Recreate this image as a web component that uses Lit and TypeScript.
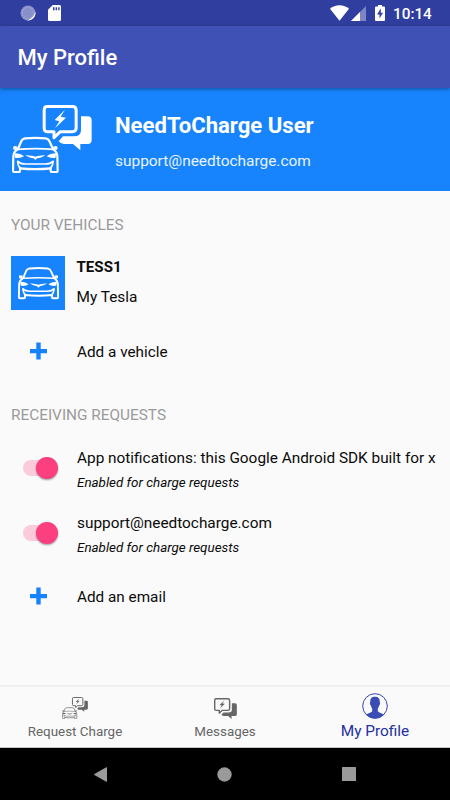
import { LitElement, html, css, svg } from "lit";
import { customElement, property } from "lit/decorators.js";

// Front view of a car, drawn on a 140 x 110 grid.
const carShape = svg`
  <g fill="none" stroke="currentColor" stroke-width="6.500" stroke-linejoin="round" stroke-linecap="round">
    <path d="M18 37 L28 13 Q31 6 39 5 Q70 2 101 5 Q109 6 112 13 L123 37"/>
    <path d="M17 38 Q70 34 124 38" stroke-width="5"/>
    <path d="M17 38 Q5 45 4 58 L3 102 Q3 106 7 106 H20 Q24 106 24 102 V95 Q70 100 116 95 V102 Q116 106 120 106 H133 Q137 106 137 102 L136 58 Q135 45 124 38"/>
    <path d="M17 74 Q25 82 40 82 H100 Q115 82 123 74" stroke-width="5"/>
    <path d="M17 75 Q18 90 26 95 M123 75 Q122 90 114 95" stroke-width="5"/>
  </g>
  <g fill="currentColor">
    <path d="M3 33 Q3 28 9 28 L17 30 L13 39 H5Z M137 33 Q137 28 131 28 L123 30 L127 39 H135Z"/>
    <path d="M8 50 Q26 50 36 59 Q24 66 9 63Z M132 50 Q114 50 104 59 Q116 66 131 63Z"/>
    <path d="M40 55 L64 58 L70 60 L76 58 L100 55 Q86 65 75 65 L70 70 L65 65 Q54 65 40 55Z"/>
  </g>`;

// Two overlapping speech bubbles with a lightning bolt, on a 148 x 136 grid.
const bubblesShape = svg`
  <path d="M13 4.500 H89 Q100.500 4.500 100.500 16 V69 Q100.500 80 89 80 H53 L34 98 V80 H13 Q4.500 80 4.500 69 V16 Q4.500 4.500 13 4.500Z"
    fill="none" stroke="currentColor" stroke-width="9" stroke-linejoin="round"/>
  <path d="M67 14 L36 45 L50 49 L37 70 L70 38 L54 35Z" fill="currentColor"/>
  <path d="M115 34 H135 Q147 34 147 46 V105 Q147 117 135 117 H113 V136 L91 117 H65 Q55 117 48 109 L61 94 H94 Q115 94 115 76Z"
    fill="currentColor"/>`;

@customElement("car-icon")
class CarIcon extends LitElement {
  static styles = css`
    :host { display: block; }
    svg { display: block; width: 100%; height: 100%; overflow: visible; }
  `;
  render() {
    return html`<svg viewBox="0 0 140 110" preserveAspectRatio="none">${carShape}</svg>`;
  }
}

@customElement("bubbles-icon")
class BubblesIcon extends LitElement {
  static styles = css`
    :host { display: block; }
    svg { display: block; width: 100%; height: 100%; overflow: visible; }
  `;
  render() {
    return html`<svg viewBox="0 0 148 136" preserveAspectRatio="none">${bubblesShape}</svg>`;
  }
}

@customElement("charge-logo")
class ChargeLogo extends LitElement {
  static styles = css`
    :host { display: block; }
    svg { display: block; width: 100%; height: 100%; }
  `;
  render() {
    return html`<svg viewBox="0 0 240 205">
      <g transform="translate(0 95)">${carShape}</g>
      <g transform="translate(92 0)">${bubblesShape}</g>
    </svg>`;
  }
}

@customElement("toggle-switch")
class ToggleSwitch extends LitElement {
  static styles = css`
    :host { display: block; width: 35px; height: 22px; }
    .track {
      width: 30px; height: 16px; margin-top: 3px; border-radius: 8px;
      background: #fccbdb; display: flex; align-items: center;
    }
    .thumb {
      flex: none; width: 22px; height: 22px; margin-left: 13px; border-radius: 50%;
      background: #fb3f7f; box-shadow: 0 1px 2px rgba(0, 0, 0, 0.4);
    }
    .wrap { display: flow-root; }
  `;
  render() {
    return html`<div class="wrap"><div class="track"><div class="thumb"></div></div></div>`;
  }
}

@customElement("add-row")
class AddRow extends LitElement {
  @property() label = "";
  static styles = css`
    :host { display: flex; align-items: center; height: 24px; }
    .lead { width: 77px; display: flex; padding: 0 0 2px 30px; box-sizing: border-box; }
    svg { display: block; width: 17px; height: 18px; }
    .label { font-size: 15.3px; line-height: 20px; white-space: nowrap; }
  `;
  render() {
    return html`
      <div class="lead"><svg viewBox="0 0 17 18"><path d="M6.300 .5H10.700V6.900H17V11.200H10.700V17.600H6.300V11.200H0V6.900H6.300Z" fill="#1682fb"/></svg></div>
      <div class="label">${this.label}</div>`;
  }
}

@customElement("request-row")
class RequestRow extends LitElement {
  @property() label = "";
  static styles = css`
    :host { display: flex; align-items: center; height: 45px; }
    .lead { flex: none; width: 77px; padding: 0 0 4px 23px; box-sizing: border-box; }
    .name { font-size: 15.36px; line-height: 20px; white-space: nowrap; }
    .note { font-size: 13.4px; line-height: 17px; font-style: italic; margin-top: 6px; white-space: nowrap; }
  `;
  render() {
    return html`
      <div class="lead"><toggle-switch></toggle-switch></div>
      <div>
        <div class="name">${this.label}</div>
        <div class="note">Enabled for charge requests</div>
      </div>`;
  }
}

@customElement("app-root")
class AppRoot extends LitElement {
  static styles = css`
    :host {
      display: flex; flex-direction: column; width: 450px; height: 800px; overflow: hidden;
      background: #fafafa; color: #0b0b0b; font-family: Roboto, "Noto Sans", sans-serif;
    }
    .status {
      flex: none; height: 26px; background: #303f9f; color: #fff; box-sizing: border-box;
      display: flex; align-items: center; padding: 0 17px 0 20px;
    }
    .status svg { display: block; flex: none; }
    .sd { margin-left: 12px; }
    .wifi { margin-left: auto; }
    .cell { margin-left: 2px; }
    .battery { margin-left: 9px; }
    .clock { font-size: 15.3px; font-weight: 500; line-height: 20px; margin: 2px 0 0 8px; width: 40px; white-space: nowrap; }
    .bar {
      flex: none; height: 62px; box-sizing: border-box; padding: 1px 0 0 17.5px; background: #3f51b5; color: #fff;
      display: flex; align-items: center; font-size: 22px; font-weight: 500;
      box-shadow: 0 1px 4px rgba(0, 0, 0, 0.4); z-index: 1;
    }
    .profile {
      flex: none; height: 103px; box-sizing: border-box; background: #1784fd; color: #fff;
      display: flex; padding: 17px 0 0 12px;
    }
    .profile charge-logo { width: 80px; height: 68.300px; }
    .who { margin-left: 23px; white-space: nowrap; }
    .user { font-size: 22.1px; font-weight: 700; line-height: 28px; margin-top: 6px; }
    .mail { font-size: 15.45px; line-height: 20px; margin-top: 12px; color: #e9f3ff; }
    .content { flex: 1; min-height: 0; }
    .heading { color: #9a9a9a; font-size: 15.36px; line-height: 20px; padding-left: 11px; white-space: nowrap; }
    .first { margin-top: 24px; }
    .vehicle { display: flex; margin: 21px 0 0 11px; height: 54px; }
    .thumb { width: 54px; height: 54px; background: #1784fd; color: #fff; display: flex; align-items: center; justify-content: center; }
    .thumb car-icon { width: 41px; height: 32.500px; margin-top: 1px; }
    .model { margin-left: 11.500px; }
    .plate { font-size: 15.1px; font-weight: 700; line-height: 20px; margin-top: 1px; }
    .nick { font-size: 15.4px; line-height: 20px; margin-top: 10px; }
    .add-vehicle { margin-top: 30px; }
    .second { margin-top: 41px; }
    .push { margin-top: 22px; }
    .by-mail { margin-top: 20px; }
    .add-mail { margin-top: 28px; }
    .tabs {
      flex: none; height: 63px; box-sizing: border-box; border-top: 2px solid #f0f0f0;
      border-bottom: 1px solid #c4c4c4; display: grid; grid-template-columns: repeat(3, 1fr);
    }
    .tab { display: flex; flex-direction: column; align-items: center; color: #666; font-size: 13.4px; white-space: nowrap; }
    .tab .text { line-height: 16px; }
    .request charge-logo { width: 26px; height: 22.200px; margin: 10px 0 5px; }
    .messages bubbles-icon { width: 23px; height: 21px; margin: 11.300px 0 4.900px; }
    .active { color: #2330a0; font-size: 15.4px; }
    .active svg { display: block; margin: 6px 0 4px; }
    .nav {
      flex: none; height: 52px; background: #000; display: grid;
      grid-template-columns: repeat(3, 125px); justify-content: center; align-items: center; justify-items: center;
    }
    .nav svg { display: block; }
    .home { margin-right: 1px; }
    .recent { margin-right: 2px; }
  `;

  render() {
    return html`
      <div class="status">
        <svg width="16" height="16" viewBox="0 0 16 16">
          <circle cx="8" cy="8" r="7.500" fill="#8890ca"/>
          <circle cx="8" cy="8" r="5.700" fill="none" stroke="#a9b0db" stroke-width="1.300" stroke-dasharray="1 1.500"/>
          <path d="M15.300 6.500A7.500 7.500 0 0 1 7 15.400Q13.500 13.800 15.300 6.500Z" fill="#fff"/>
        </svg>
        <svg class="sd" width="13" height="16" viewBox="0 0 13 16">
          <path d="M4.800 0H11.500Q13 0 13 1.500V14.500Q13 16 11.500 16H1.500Q0 16 0 14.500V4.800Z" fill="#fff"/>
          <path d="M5 2.300H6.500V5.300H5ZM7.600 2.300H9V5.300H7.600ZM10.200 2.300H11.600V5.300H10.200Z" fill="#303f9f"/>
        </svg>
        <svg class="wifi" width="19" height="16" viewBox="0 0 19 16"><path d="M0 3.700Q4 .2 9.500 .2T19 3.700L9.500 15.800Z" fill="#fff"/></svg>
        <svg class="cell" width="15" height="15" viewBox="0 0 15 15">
          <path d="M15 0V15H0Z" fill="#7d86c3"/><path d="M9 6V15H0Z" fill="#fff"/>
        </svg>
        <svg class="battery" width="10" height="16" viewBox="0 0 10 16">
          <path d="M3 0H7V1.600H9Q10 1.600 10 2.800V15Q10 16 9 16H1Q0 16 0 15V2.800Q0 1.600 1 1.600H3Z" fill="#fff"/>
          <path d="M5.800 3.600L2 9.500H4.500V13.500L8 7.700H5.800Z" fill="#303f9f"/>
        </svg>
        <div class="clock">10:14</div>
      </div>
      <div class="bar">My Profile</div>
      <div class="profile">
        <charge-logo></charge-logo>
        <div class="who">
          <div class="user">NeedToCharge User</div>
          <div class="mail">support@needtocharge.com</div>
        </div>
      </div>
      <div class="content">
        <div class="heading first">YOUR VEHICLES</div>
        <div class="vehicle">
          <div class="thumb"><car-icon></car-icon></div>
          <div class="model">
            <div class="plate">TESS1</div>
            <div class="nick">My Tesla</div>
          </div>
        </div>
        <add-row class="add-vehicle" label="Add a vehicle"></add-row>
        <div class="heading second">RECEIVING REQUESTS</div>
        <request-row class="push" label="App notifications: this Google Android SDK built for x"></request-row>
        <request-row class="by-mail" label="support@needtocharge.com"></request-row>
        <add-row class="add-mail" label="Add an email"></add-row>
      </div>
      <div class="tabs">
        <div class="tab request"><charge-logo></charge-logo><div class="text">Request Charge</div></div>
        <div class="tab messages"><bubbles-icon></bubbles-icon><div class="text">Messages</div></div>
        <div class="tab active">
          <svg width="26" height="26" viewBox="0 0 26 26">
            <circle cx="13" cy="13" r="12.300" fill="none" stroke="#3547b0" stroke-width="1"/>
            <path d="M13 3.800C16.800 3.800 18 6 17.700 9.300C18.500 9.700 18 12 17.200 12.300C16.900 14 16.200 15 15.800 15.600V18.200C17 19.800 20 20 22 21.500A12.300 12.300 0 0 1 4 21.500C6 20 9 19.800 10.200 18.200V15.600C9.800 15 9.100 14 8.800 12.300C8 12 7.500 9.700 8.300 9.300C8 6 9.200 3.800 13 3.800Z" fill="#3b4db5"/>
          </svg>
          <div class="text">My Profile</div>
        </div>
      </div>
      <div class="nav">
        <svg width="13" height="15" viewBox="0 0 13 15"><path d="M13 .5V14.500Q13 15 12.300 14.700L.4 8Q0 7.500 .4 7L12.300 .3Q13 0 13 .5Z" fill="#9a9a9a"/></svg>
        <svg class="home" width="15" height="15" viewBox="0 0 15 15"><circle cx="7.500" cy="7.500" r="7.200" fill="#9a9a9a"/></svg>
        <svg class="recent" width="14" height="14" viewBox="0 0 14 14"><rect width="14" height="14" rx=".5" fill="#9a9a9a"/></svg>
      </div>`;
  }
}
